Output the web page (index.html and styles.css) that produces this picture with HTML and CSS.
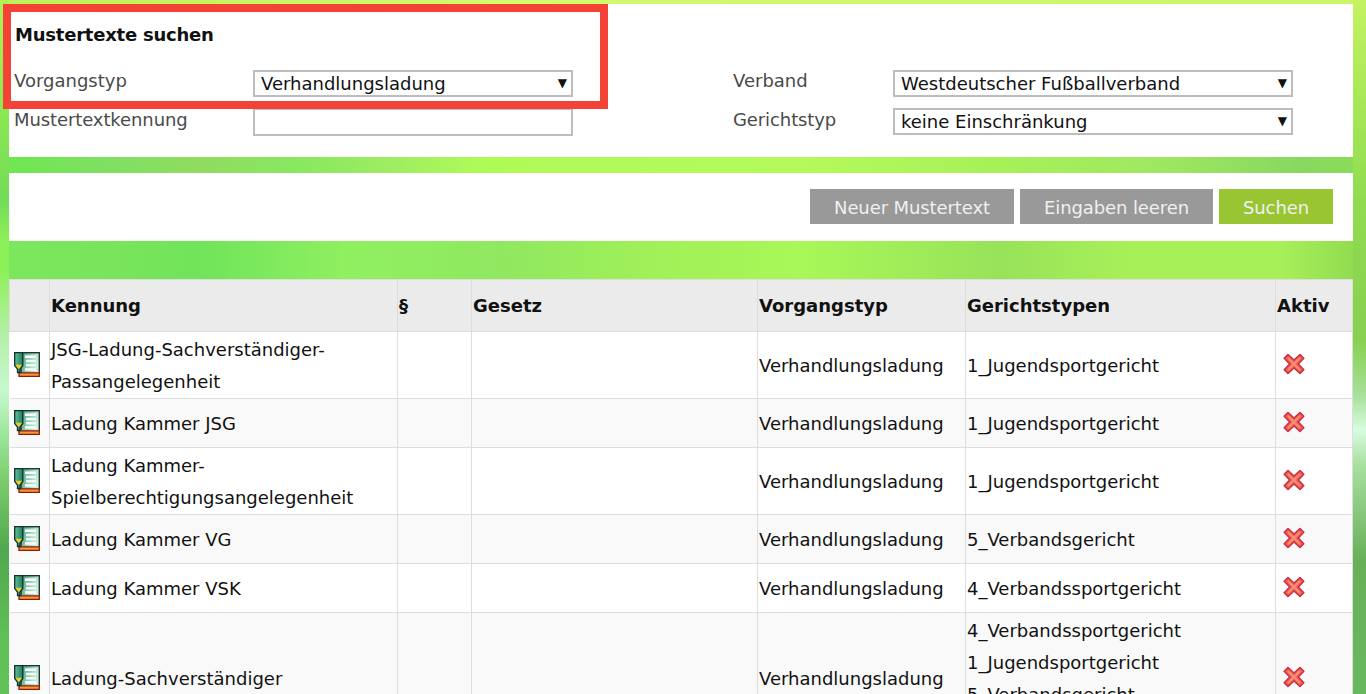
FILE: index.html
```html
<!DOCTYPE html>
<html lang="de">
<head>
<meta charset="utf-8">
<title>Mustertexte suchen</title>
<link rel="stylesheet" href="styles.css">
</head>
<body>
<svg class="defs" width="0" height="0" aria-hidden="true">
  <defs>
    <linearGradient id="page" x1="0" y1="0" x2="1" y2="0.300">
      <stop offset="0" stop-color="#4f9f86"/>
      <stop offset="0.700" stop-color="#a6dcc4"/>
      <stop offset="1" stop-color="#cfeee0"/>
    </linearGradient>
    <linearGradient id="pen" x1="0" y1="0" x2="1" y2="0">
      <stop offset="0" stop-color="#63c09a"/>
      <stop offset="1" stop-color="#1f7d5c"/>
    </linearGradient>
  </defs>
  <symbol id="doc" viewBox="0 0 26 25">
    <rect x="7" y="0.700" width="18.300" height="21" fill="url(#page)" stroke="#1a3a30" stroke-width="1.400"/>
    <rect x="11" y="3.500" width="11" height="2.500" fill="#fff"/>
    <rect x="12" y="7.800" width="10" height="2.500" fill="#f2fbf6"/>
    <rect x="12" y="12" width="10" height="2.500" fill="#f2fbf6"/>
    <rect x="11" y="16.200" width="11" height="2.500" fill="#fff"/>
    <path d="M5 20.800H25.300V24.300H5Z" fill="#f59a2e" stroke="#8e1a10" stroke-width="1.300"/>
    <path d="M0.700 0.700H8.800V13.500L6 17V20.500H3.500V17L0.700 13.500Z" fill="url(#pen)" stroke="#10302a" stroke-width="1.300"/>
    <path d="M1.500 12.800H8L5.600 16.400H3.900Z" fill="#f4cc1c"/>
  </symbol>
  <symbol id="cross" viewBox="0 0 22 22">
    <path d="M5 1.500L11 7L17 1.500L20.800 5.300L15.300 11L20.800 16.800L17 20.500L11 15L5 20.500L1.200 16.800L6.700 11L1.200 5.300Z" fill="#f2604a" stroke="#c9324a" stroke-width="1.600" stroke-linejoin="round"/>
    <path d="M5 5L17 17M17 5L5 17" stroke="#fb9078" stroke-width="1.800"/>
  </symbol>
</svg>
<main class="page">
  <section class="panel search">
    <h1 class="title">Mustertexte suchen</h1>
    <div class="fields">
      <label class="lbl">Vorgangstyp</label>
      <div class="sel">Verhandlungsladung</div>
      <label class="lbl right">Verband</label>
      <div class="sel">Westdeutscher Fußballverband</div>
      <label class="lbl low">Mustertextkennung</label>
      <input class="txt" type="text">
      <label class="lbl right low">Gerichtstyp</label>
      <div class="sel">keine Einschränkung</div>
    </div>
  </section>
  <section class="panel actions">
    <button class="btn">Neuer Mustertext</button>
    <button class="btn">Eingaben leeren</button>
    <button class="btn go">Suchen</button>
  </section>
  <table class="list">
    <colgroup>
      <col class="c0"><col class="c1"><col class="c2"><col class="c3"><col class="c4"><col class="c5"><col class="c6">
    </colgroup>
    <thead>
      <tr><th></th><th>Kennung</th><th>§</th><th>Gesetz</th><th>Vorgangstyp</th><th>Gerichtstypen</th><th>Aktiv</th></tr>
    </thead>
    <tbody>
      <tr>
        <td class="ic"><svg class="doc"><use href="#doc"/></svg></td>
        <td>JSG-Ladung-Sachverständiger-Passangelegenheit</td><td></td><td></td>
        <td>Verhandlungsladung</td><td>1_Jugendsportgericht</td>
        <td class="ak"><svg class="cross"><use href="#cross"/></svg></td>
      </tr>
      <tr>
        <td class="ic"><svg class="doc"><use href="#doc"/></svg></td>
        <td>Ladung Kammer JSG</td><td></td><td></td>
        <td>Verhandlungsladung</td><td>1_Jugendsportgericht</td>
        <td class="ak"><svg class="cross"><use href="#cross"/></svg></td>
      </tr>
      <tr>
        <td class="ic"><svg class="doc"><use href="#doc"/></svg></td>
        <td>Ladung Kammer-Spielberechtigungsangelegenheit</td><td></td><td></td>
        <td>Verhandlungsladung</td><td>1_Jugendsportgericht</td>
        <td class="ak"><svg class="cross"><use href="#cross"/></svg></td>
      </tr>
      <tr>
        <td class="ic"><svg class="doc"><use href="#doc"/></svg></td>
        <td>Ladung Kammer VG</td><td></td><td></td>
        <td>Verhandlungsladung</td><td>5_Verbandsgericht</td>
        <td class="ak"><svg class="cross"><use href="#cross"/></svg></td>
      </tr>
      <tr>
        <td class="ic"><svg class="doc"><use href="#doc"/></svg></td>
        <td>Ladung Kammer VSK</td><td></td><td></td>
        <td>Verhandlungsladung</td><td>4_Verbandssportgericht</td>
        <td class="ak"><svg class="cross"><use href="#cross"/></svg></td>
      </tr>
      <tr>
        <td class="ic"><svg class="doc"><use href="#doc"/></svg></td>
        <td>Ladung-Sachverständiger</td><td></td><td></td>
        <td>Verhandlungsladung</td>
        <td>4_Verbandssportgericht<br>1_Jugendsportgericht<br>5_Verbandsgericht<br>&nbsp;</td>
        <td class="ak"><svg class="cross"><use href="#cross"/></svg></td>
      </tr>
    </tbody>
  </table>
</main>
</body>
</html>
```
FILE: styles.css
```css
html, body {
  margin: 0;
  height: 694px;
  overflow: hidden;
}
body {
  font-family: "DejaVu Sans", Verdana, sans-serif;
  font-size: 18px;
  color: #111;
  background-color: #a8f25a;
  background-image:
    linear-gradient(180deg, #b4ee58 0, #8ce852 110px, #72dc58 200px, #8ef058 240px, #8ef058 270px, #b4f0a8 335px, #c8f8d0 390px, #a0e8a0 430px, #7ccc6c 480px, #50a850 550px, #60c055 640px, #62c258 694px),
    linear-gradient(180deg, #c4f262 0, #a8e858 100px, #90dc50 200px, #88d050 340px, #a8e09a 395px, #d8fce0 430px, #a8e0a0 465px, #68b058 560px, #68b860 694px),
    linear-gradient(90deg, #7ce85c 0, #7ae45c 100px, #70e45a 200px, #90f060 350px, #90e860 500px, #a0f058 650px, #a8f858 800px, #98e25a 1000px, #a8f058 1130px, #a8f058 1280px, #8ed850 1366px),
    linear-gradient(90deg, #6ce850 0, #7ee060 100px, #90dc60 200px, #88e860 300px, #a0ee60 400px, #b0fa58 480px, #b4fa5c 800px, #a8f058 1000px, #a0e860 1150px, #88d860 1300px, #8cdc58 1366px),
    linear-gradient(90deg, #bcf05a 0, #d2fa6c 500px, #c8f666 1366px);
  background-size:
    9px 694px,
    13px 694px,
    100% 40px,
    100% 18px,
    100% 5px;
  background-position:
    0 0,
    100% 0,
    0 240px,
    0 156px,
    0 0;
  background-repeat: no-repeat;
}
.defs { position: absolute; }
.page { padding: 4px 13px 0 9px; }
.panel { background: #fff; }
.search {
  position: relative;
  height: 153px;
  box-sizing: border-box;
  padding: 20px 0 0 5px;
}
.search::after {
  content: "";
  position: absolute;
  left: -6px;
  top: 0;
  width: 605px;
  height: 105px;
  box-sizing: border-box;
  border: 8px solid #f44336;
  pointer-events: none;
}
.title {
  margin: 0 0 0 1px;
  font-size: 18px;
  line-height: 22px;
  font-weight: bold;
  letter-spacing: -0.22px;
  color: #111;
}
.fields {
  display: grid;
  grid-template-columns: 239px 320px 320px 400px;
  row-gap: 11px;
  margin-top: 24px;
  align-items: start;
}
.lbl {
  font-size: 18px;
  line-height: 22px;
  color: #4a4a4a;
}
.lbl.low { padding-top: 1px; letter-spacing: -0.1px; }
.lbl.right { padding-left: 160px; }
.sel {
  position: relative;
  box-sizing: border-box;
  height: 27px;
  border: 2px solid #bdbdbd;
  padding: 0 6px;
  line-height: 24px;
  background: #fff;
  color: #111;
}
.sel::after {
  content: "▼";
  position: absolute;
  right: 4px;
  top: 1px;
  font-size: 12px;
  line-height: 20px;
}
.txt {
  box-sizing: border-box;
  width: 320px;
  height: 28px;
  margin: 0;
  border: 2px solid #bdbdbd;
  background: #fff;
  padding: 0 6px;
}
.actions {
  display: flex;
  justify-content: flex-end;
  gap: 6px;
  margin-top: 16px;
  height: 68px;
  box-sizing: border-box;
  padding: 16px 20px 0 0;
}
.btn {
  height: 35px;
  border: 0;
  padding: 2px 24px 0;
  background: #999;
  color: #f0f0f0;
  font: inherit;
  letter-spacing: -0.1px;
}
.btn.go { background: #99c533; }
.list {
  width: 1343px;
  margin-top: 38px;
  border-collapse: collapse;
  table-layout: fixed;
  background: #fff;
}
.c0 { width: 40px; }
.c1 { width: 348px; }
.c2 { width: 74px; }
.c3 { width: 286px; }
.c4 { width: 208px; }
.c5 { width: 310px; }
.c6 { width: 77px; }
.list th, .list td {
  border: 1px solid #ddd;
  padding: 0 1px;
  text-align: left;
  vertical-align: middle;
  line-height: 32px;
}
.list th {
  height: 52px;
  box-sizing: border-box;
  background: #ebebeb;
  font-weight: bold;
}
.list td { padding-top: 2px; padding-bottom: 0; }
.list td:first-child { border-left: 0; }
.list tbody tr { height: 49px; }
.list tbody tr:nth-child(even) { background: #f9f9f9; }
.list td.ic { padding: 0 0 0 4px; line-height: 0; }
.doc { display: block; width: 26px; height: 25px; margin-bottom: 2px; }
.cross { display: block; width: 22px; height: 22px; margin-left: 6px; margin-top: -4px; }
```
